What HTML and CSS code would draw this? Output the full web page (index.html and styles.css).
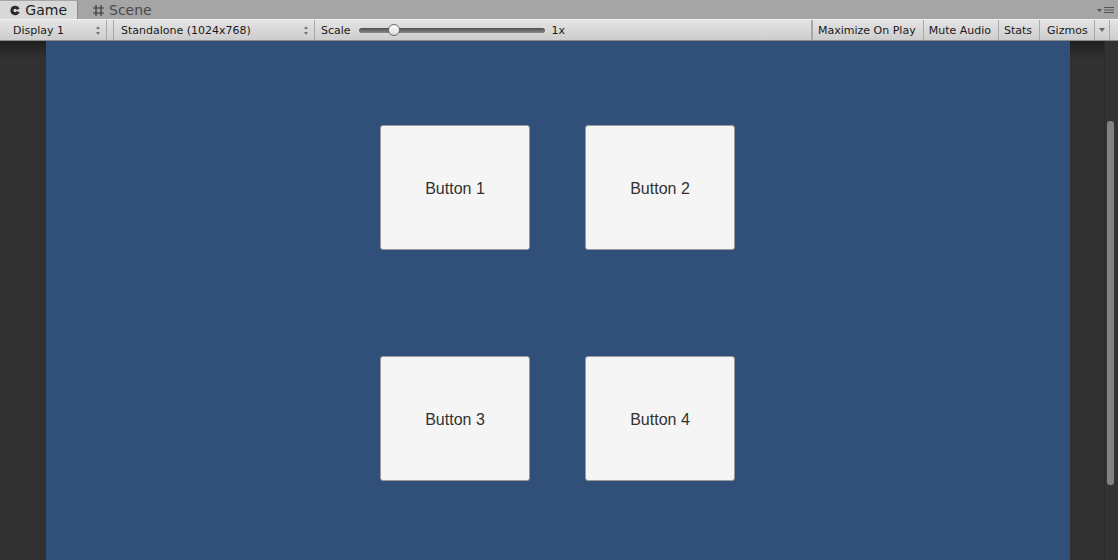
FILE: index.html
```html
<!DOCTYPE html>
<html lang="en">
<head>
  <meta charset="UTF-8" />
  <title>Game</title>
  <link rel="stylesheet" href="styles.css">
</head>
<body>

  <div class="tabs">
    <div class="tab active">
      <svg class="tab-icon" width="11" height="11" viewBox="0 0 11 11"><path d="M5.5 0.5 A5 5 0 1 0 10.2 7.2 L6.8 6.2 A1.6 1.6 0 1 1 6.8 4.8 L10.2 3.8 A5 5 0 0 0 5.5 0.5 Z" fill="#2a2a2a"/></svg>
      Game
    </div>
    <div class="tab">
      <svg class="tab-icon" width="13" height="13" viewBox="0 0 13 13"><path d="M4 1 V12 M9 1 V12 M1 4 H12 M1 9 H12" stroke="#3a3a3a" stroke-width="1.2" fill="none"/></svg>
      Scene
    </div>
    <div class="tab-menu">
      <svg width="20" height="8" viewBox="0 0 20 8"><path d="M1 3 H6 L3.5 6 Z" fill="#555"/><path d="M8 1.5 H18 M8 4 H18 M8 6.5 H18" stroke="#555" stroke-width="1.2"/></svg>
    </div>
  </div>

  <div class="toolbar">
    <div class="tool drop display">Display 1 <span class="updown"></span></div>
    <div class="gap"></div>
    <div class="tool drop aspect">Standalone (1024x768) <span class="updown"></span></div>
    <div class="tool scale">
      Scale
      <div class="slider"><div class="thumb"></div></div>
      <span class="scale-val">1x</span>
    </div>
    <div class="tool btn maximize">Maximize On Play</div>
    <div class="tool btn">Mute Audio</div>
    <div class="tool btn">Stats</div>
    <div class="tool btn gizmos">Gizmos</div>
    <div class="tool btn more"><span class="down"></span></div>
    <div class="tool end"></div>
  </div>

  <div class="view">
    <div class="side left"></div>
    <div class="screen">
      <div class="grid">
        <div class="ui-button">Button 1</div>
        <div class="ui-button">Button 2</div>
        <div class="ui-button">Button 3</div>
        <div class="ui-button">Button 4</div>
      </div>
    </div>
    <div class="side right">
      <div class="scrollbar"><div class="scroll-thumb"></div></div>
    </div>
  </div>

</body>
</html>
```

FILE: styles.css
```css
body {
  margin: 0;
  width: 1118px;
  height: 560px;
  overflow: hidden;
  font-family: "DejaVu Sans", Verdana, sans-serif;
  background: #313131;
}
.tabs {
  height: 19px;
  background: #a5a5a5;
  display: flex;
  align-items: flex-end;
}
.tab {
  height: 18px;
  display: flex;
  align-items: center;
  gap: 5px;
  padding: 0 10px 0 10px;
  font-size: 14px;
  color: #4a4a4a;
  box-sizing: border-box;
}
.tab.active {
  width: 78px;
  background: #d8d8d8;
  color: #1e1e1e;
  border-right: 1px solid #8a8a8a;
}
.tab + .tab {
  padding-left: 14px;
  gap: 4px;
}
.tab-menu {
  margin-left: auto;
  height: 19px;
  display: flex;
  align-items: center;
  padding-right: 2px;
}
.toolbar {
  height: 22px;
  display: flex;
  background: linear-gradient(#e4e4e4, #cdcdcd);
  border-top: 1px solid #f0f0f0;
  border-bottom: 1px solid #8a8a8a;
  box-sizing: border-box;
  font-size: 11px;
  color: #1a1a1a;
}
.tool {
  display: flex;
  align-items: center;
  padding-top: 1px;
  border-right: 1px solid #a8a8a8;
  box-sizing: border-box;
  white-space: nowrap;
}
.drop {
  justify-content: space-between;
  padding: 1px 4px 0 12px;
}
.display {
  width: 107px;
  padding-left: 13px;
}
.gap {
  width: 6px;
  border-right: 1px solid #a8a8a8;
}
.aspect {
  width: 201px;
  padding-left: 7px;
}
.updown {
  width: 7px;
  height: 9px;
  position: relative;
}
.updown::before,
.updown::after {
  content: "";
  position: absolute;
  left: 1px;
  border-left: 2.5px solid transparent;
  border-right: 2.5px solid transparent;
}
.updown::before {
  top: 0;
  border-bottom: 3px solid #777;
}
.updown::after {
  bottom: 0;
  border-top: 3px solid #777;
}
.scale {
  width: 497px;
  padding-left: 6px;
}
.slider {
  width: 186px;
  height: 5px;
  margin: 0 7px 0 8px;
  border-radius: 3px;
  background: linear-gradient(#4f4f4f, #8a8a8a);
  position: relative;
}
.thumb {
  position: absolute;
  left: 29px;
  top: -4px;
  width: 12px;
  height: 12px;
  border-radius: 50%;
  background: linear-gradient(#ffffff, #dcdcdc);
  border: 1px solid #6a6a6a;
  box-sizing: border-box;
}
.btn {
  padding: 1px 7px 0 5px;
}
.maximize {
  border-left: 1px solid #a8a8a8;
  padding-left: 5px;
  padding-right: 7px;
}
.gizmos {
  padding-left: 7px;
  padding-right: 6px;
}
.more {
  width: 15px;
  padding: 0;
  justify-content: center;
}
.down {
  border-left: 3px solid transparent;
  border-right: 3px solid transparent;
  border-top: 4px solid #666;
}
.end {
  width: 8px;
  border-right: none;
}
.view {
  height: 519px;
  display: flex;
}
.side {
  background: #313131;
}
.left {
  width: 46px;
  background: linear-gradient(#1f1f1f, #313131 18px);
}
.right {
  width: 48px;
  display: flex;
  justify-content: flex-end;
  background: linear-gradient(#1f1f1f, #313131 18px);
}
.scrollbar {
  width: 14px;
  background: #333;
  border-left: 1px solid #2b2b2b;
  box-sizing: border-box;
  padding: 80px 4px 0 2px;
}
.scroll-thumb {
  height: 364px;
  background: #828282;
  border-radius: 3px;
}
.screen {
  width: 1024px;
  background: #315079;
}
.grid {
  display: grid;
  grid-template-columns: 150px 150px;
  grid-auto-rows: 125px;
  column-gap: 55px;
  row-gap: 106px;
  padding: 84px 0 0 334px;
}
.ui-button {
  background: #f5f5f5;
  border-radius: 3px;
  border: 1px solid #9a9a9a;
  box-sizing: border-box;
  display: flex;
  align-items: center;
  justify-content: center;
  padding-top: 2px;
  font-family: "Liberation Sans", Arial, sans-serif;
  font-size: 16px;
  color: #323232;
}
```
